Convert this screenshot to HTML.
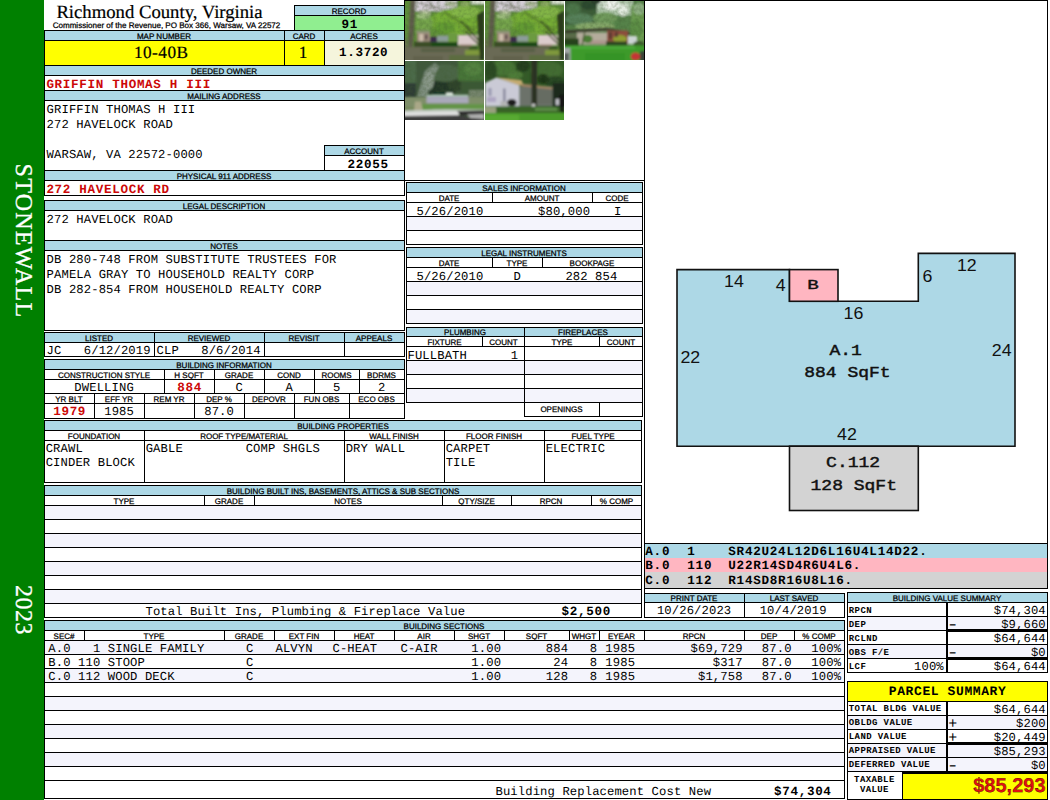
<!DOCTYPE html>
<html lang="en"><head><meta charset="utf-8"><title>Richmond County, Virginia - Property Card 10-40B</title>
<style>
html,body{margin:0;padding:0}
body{width:1050px;height:800px;position:relative;overflow:hidden;background:#fff;color:#000}
.r,.k,.x{position:absolute}
.k{background:#000}
.x{white-space:pre;text-rendering:geometricPrecision}
.s{font-family:"Liberation Sans",Arial,sans-serif;-webkit-text-stroke:0.25px #000}
.m{font-family:"Liberation Mono","Courier New",monospace}
.t{font-family:"Liberation Serif","Times New Roman",serif;-webkit-text-stroke:0.2px currentColor}
svg{position:absolute;display:block}
</style></head>
<body>
<div class="r" style="left:0px;top:0px;width:44px;height:800px;background:#008000"></div>
<div class="k" style="left:44px;top:30px;width:1px;height:166px"></div>
<div class="k" style="left:44px;top:200px;width:1px;height:131px"></div>
<div class="k" style="left:44px;top:332px;width:1px;height:25px"></div>
<div class="k" style="left:44px;top:359px;width:1px;height:60px"></div>
<div class="k" style="left:44px;top:420px;width:1px;height:63px"></div>
<div class="k" style="left:44px;top:485px;width:1px;height:133px"></div>
<div class="k" style="left:44px;top:620px;width:1px;height:179px"></div>
<div class="x t" style="left:23px;top:240.8px;width:0;height:0;color:#fff;font-size:24px;line-height:24px;letter-spacing:1.25px;-webkit-text-stroke:0.3px #fff"><div style="position:absolute;left:-100px;top:-12px;width:200px;text-align:center;transform:rotate(90deg)">STONEWALL</div></div>
<div class="x t" style="left:23px;top:610px;width:0;height:0;color:#fff;font-size:24px;line-height:24px;letter-spacing:0.5px;-webkit-text-stroke:0.3px #fff"><div style="position:absolute;left:-100px;top:-12px;width:200px;text-align:center;transform:rotate(90deg)">2023</div></div>
<div class="k" style="left:404px;top:0px;width:1px;height:196px"></div>
<div class="k" style="left:404px;top:200px;width:1px;height:131px"></div>
<div class="k" style="left:404px;top:332px;width:1px;height:25px"></div>
<div class="k" style="left:404px;top:359px;width:1px;height:60px"></div>
<div class="x t" style="top:0.69px;font-size:18.7px;line-height:24px;left:-140.5px;width:600px;text-align:center;">Richmond County, Virginia</div>
<div class="x s" style="top:20.71px;font-size:8.05px;line-height:10px;left:-133.5px;width:600px;text-align:center;">Commissioner of the Revenue, PO Box 366, Warsaw, VA 22572</div>
<div class="r" style="left:295px;top:6px;width:109px;height:9px;background:#add8e6"></div>
<div class="r" style="left:295px;top:16px;width:109px;height:14px;background:#90ee90"></div>
<div class="k" style="left:294px;top:5px;width:111px;height:1px"></div>
<div class="k" style="left:294px;top:15px;width:111px;height:1px"></div>
<div class="k" style="left:294px;top:5px;width:1px;height:26px"></div>
<div class="x s" style="top:7.23px;font-size:8.0px;line-height:10px;left:49px;width:600px;text-align:center;">RECORD</div>
<div class="x m" style="top:16.64px;font-size:12.6px;line-height:16px;left:49px;width:600px;text-align:center;font-weight:bold;letter-spacing:0.67px;padding-left:0.67px;">91</div>
<div class="k" style="left:44px;top:30px;width:361px;height:1px"></div>
<div class="r" style="left:45px;top:31px;width:359px;height:9px;background:#add8e6"></div>
<div class="k" style="left:44px;top:40px;width:361px;height:1px"></div>
<div class="r" style="left:45px;top:41px;width:279px;height:24px;background:#ffff00"></div>
<div class="r" style="left:325px;top:41px;width:79px;height:24px;background:#f5f5dc"></div>
<div class="k" style="left:44px;top:65px;width:361px;height:1px"></div>
<div class="k" style="left:284px;top:30px;width:1px;height:36px"></div>
<div class="k" style="left:324px;top:30px;width:1px;height:36px"></div>
<div class="x s" style="top:32.23px;font-size:8.0px;line-height:10px;left:-136px;width:600px;text-align:center;">MAP NUMBER</div>
<div class="x s" style="top:32.23px;font-size:8.0px;line-height:10px;left:4px;width:600px;text-align:center;">CARD</div>
<div class="x s" style="top:32.23px;font-size:8.0px;line-height:10px;left:64px;width:600px;text-align:center;">ACRES</div>
<div class="x t" style="top:42.20px;font-size:17.2px;line-height:22px;left:-139.3px;width:600px;text-align:center;letter-spacing:0.5px;padding-left:0.5px;">10-40B</div>
<div class="x t" style="top:42.20px;font-size:17.2px;line-height:22px;left:3px;width:600px;text-align:center;">1</div>
<div class="x m" style="top:44.64px;font-size:12.6px;line-height:16px;left:63px;width:600px;text-align:center;font-weight:bold;letter-spacing:0.67px;padding-left:0.67px;">1.3720</div>
<div class="r" style="left:45px;top:66px;width:359px;height:9px;background:#add8e6"></div>
<div class="k" style="left:44px;top:75px;width:361px;height:1px"></div>
<div class="k" style="left:44px;top:90px;width:361px;height:1px"></div>
<div class="x s" style="top:67.23px;font-size:8.0px;line-height:10px;left:-76px;width:600px;text-align:center;">DEEDED OWNER</div>
<div class="x m" style="top:76.64px;font-size:12.6px;line-height:16px;left:46.4px;font-weight:bold;color:#cc0808;letter-spacing:0.67px;">GRIFFIN THOMAS H III</div>
<div class="r" style="left:45px;top:91px;width:359px;height:9px;background:#add8e6"></div>
<div class="k" style="left:44px;top:100px;width:361px;height:1px"></div>
<div class="x s" style="top:92.23px;font-size:8.0px;line-height:10px;left:-76px;width:600px;text-align:center;">MAILING ADDRESS</div>
<div class="x m" style="top:101.75px;font-size:12.2px;line-height:16px;left:46.6px;letter-spacing:0.12px;">GRIFFIN THOMAS H III</div>
<div class="x m" style="top:116.75px;font-size:12.2px;line-height:16px;left:46.6px;letter-spacing:0.12px;">272 HAVELOCK ROAD</div>
<div class="x m" style="top:146.75px;font-size:12.2px;line-height:16px;left:46.6px;letter-spacing:0.12px;">WARSAW, VA 22572-0000</div>
<div class="k" style="left:324px;top:145px;width:81px;height:1px"></div>
<div class="k" style="left:324px;top:145px;width:1px;height:26px"></div>
<div class="r" style="left:325px;top:146px;width:79px;height:9px;background:#add8e6"></div>
<div class="k" style="left:324px;top:155px;width:81px;height:1px"></div>
<div class="x s" style="top:147.23px;font-size:8.0px;line-height:10px;left:64px;width:600px;text-align:center;">ACCOUNT</div>
<div class="x m" style="top:156.64px;font-size:12.6px;line-height:16px;left:67.5px;width:600px;text-align:center;font-weight:bold;letter-spacing:0.67px;padding-left:0.67px;">22055</div>
<div class="k" style="left:44px;top:170px;width:361px;height:1px"></div>
<div class="r" style="left:45px;top:171px;width:359px;height:9px;background:#add8e6"></div>
<div class="k" style="left:44px;top:180px;width:361px;height:1px"></div>
<div class="k" style="left:44px;top:195px;width:361px;height:1px"></div>
<div class="x s" style="top:172.23px;font-size:8.0px;line-height:10px;left:-76px;width:600px;text-align:center;">PHYSICAL 911 ADDRESS</div>
<div class="x m" style="top:181.64px;font-size:12.6px;line-height:16px;left:46.4px;font-weight:bold;color:#cc0808;letter-spacing:0.67px;">272 HAVELOCK RD</div>
<div class="k" style="left:44px;top:200px;width:361px;height:1px"></div>
<div class="r" style="left:45px;top:201px;width:359px;height:9px;background:#add8e6"></div>
<div class="k" style="left:44px;top:210px;width:361px;height:1px"></div>
<div class="k" style="left:44px;top:240px;width:361px;height:1px"></div>
<div class="x s" style="top:202.23px;font-size:8.0px;line-height:10px;left:-76px;width:600px;text-align:center;">LEGAL DESCRIPTION</div>
<div class="x m" style="top:211.75px;font-size:12.2px;line-height:16px;left:46.6px;letter-spacing:0.12px;">272 HAVELOCK ROAD</div>
<div class="r" style="left:45px;top:241px;width:359px;height:9px;background:#add8e6"></div>
<div class="k" style="left:44px;top:250px;width:361px;height:1px"></div>
<div class="k" style="left:44px;top:330px;width:361px;height:1px"></div>
<div class="x s" style="top:242.23px;font-size:8.0px;line-height:10px;left:-76px;width:600px;text-align:center;">NOTES</div>
<div class="x m" style="top:251.75px;font-size:12.2px;line-height:16px;left:46.6px;letter-spacing:0.12px;">DB 280-748 FROM SUBSTITUTE TRUSTEES FOR</div>
<div class="x m" style="top:266.75px;font-size:12.2px;line-height:16px;left:46.6px;letter-spacing:0.12px;">PAMELA GRAY TO HOUSEHOLD REALTY CORP</div>
<div class="x m" style="top:281.75px;font-size:12.2px;line-height:16px;left:46.6px;letter-spacing:0.12px;">DB 282-854 FROM HOUSEHOLD REALTY CORP</div>
<div class="k" style="left:44px;top:332px;width:361px;height:1px"></div>
<div class="r" style="left:45px;top:333px;width:359px;height:9px;background:#add8e6"></div>
<div class="k" style="left:44px;top:342px;width:361px;height:1px"></div>
<div class="k" style="left:44px;top:356px;width:361px;height:1px"></div>
<div class="k" style="left:154px;top:332px;width:1px;height:25px"></div>
<div class="k" style="left:264px;top:332px;width:1px;height:25px"></div>
<div class="k" style="left:344px;top:332px;width:1px;height:25px"></div>
<div class="x s" style="top:334.23px;font-size:8.0px;line-height:10px;left:-201px;width:600px;text-align:center;">LISTED</div>
<div class="x s" style="top:334.23px;font-size:8.0px;line-height:10px;left:-91px;width:600px;text-align:center;">REVIEWED</div>
<div class="x s" style="top:334.23px;font-size:8.0px;line-height:10px;left:4px;width:600px;text-align:center;">REVISIT</div>
<div class="x s" style="top:334.23px;font-size:8.0px;line-height:10px;left:74px;width:600px;text-align:center;">APPEALS</div>
<div class="x m" style="top:342.75px;font-size:12.2px;line-height:16px;left:46.6px;letter-spacing:0.12px;">JC   6/12/2019</div>
<div class="x m" style="top:342.75px;font-size:12.2px;line-height:16px;left:156.6px;letter-spacing:0.12px;">CLP   8/6/2014</div>
<div class="k" style="left:44px;top:359px;width:361px;height:1px"></div>
<div class="r" style="left:45px;top:360px;width:359px;height:9px;background:#add8e6"></div>
<div class="k" style="left:44px;top:369px;width:361px;height:1px"></div>
<div class="k" style="left:44px;top:379px;width:361px;height:1px"></div>
<div class="k" style="left:44px;top:393px;width:361px;height:1px"></div>
<div class="k" style="left:44px;top:403px;width:361px;height:1px"></div>
<div class="k" style="left:44px;top:418px;width:361px;height:1px"></div>
<div class="x s" style="top:361.23px;font-size:8.0px;line-height:10px;left:-76px;width:600px;text-align:center;">BUILDING INFORMATION</div>
<div class="k" style="left:164px;top:369px;width:1px;height:25px"></div>
<div class="k" style="left:214px;top:369px;width:1px;height:25px"></div>
<div class="k" style="left:264px;top:369px;width:1px;height:25px"></div>
<div class="k" style="left:314px;top:369px;width:1px;height:25px"></div>
<div class="k" style="left:359px;top:369px;width:1px;height:25px"></div>
<div class="k" style="left:94px;top:393px;width:1px;height:26px"></div>
<div class="k" style="left:144px;top:393px;width:1px;height:26px"></div>
<div class="k" style="left:194px;top:393px;width:1px;height:26px"></div>
<div class="k" style="left:244px;top:393px;width:1px;height:26px"></div>
<div class="k" style="left:294px;top:393px;width:1px;height:26px"></div>
<div class="k" style="left:349px;top:393px;width:1px;height:26px"></div>
<div class="x s" style="top:371.23px;font-size:8.0px;line-height:10px;left:-196px;width:600px;text-align:center;">CONSTRUCTION STYLE</div>
<div class="x s" style="top:371.23px;font-size:8.0px;line-height:10px;left:-111px;width:600px;text-align:center;">H SQFT</div>
<div class="x s" style="top:371.23px;font-size:8.0px;line-height:10px;left:-61px;width:600px;text-align:center;">GRADE</div>
<div class="x s" style="top:371.23px;font-size:8.0px;line-height:10px;left:-11px;width:600px;text-align:center;">COND</div>
<div class="x s" style="top:371.23px;font-size:8.0px;line-height:10px;left:36.5px;width:600px;text-align:center;">ROOMS</div>
<div class="x s" style="top:371.23px;font-size:8.0px;line-height:10px;left:81.5px;width:600px;text-align:center;">BDRMS</div>
<div class="x m" style="top:379.75px;font-size:12.2px;line-height:16px;left:-196px;width:600px;text-align:center;letter-spacing:0.12px;padding-left:0.12px;">DWELLING</div>
<div class="x m" style="top:379.64px;font-size:12.6px;line-height:16px;left:-111px;width:600px;text-align:center;font-weight:bold;color:#cc0808;letter-spacing:0.67px;padding-left:0.67px;">884</div>
<div class="x m" style="top:379.75px;font-size:12.2px;line-height:16px;left:-61px;width:600px;text-align:center;letter-spacing:0.12px;padding-left:0.12px;">C</div>
<div class="x m" style="top:379.75px;font-size:12.2px;line-height:16px;left:-11px;width:600px;text-align:center;letter-spacing:0.12px;padding-left:0.12px;">A</div>
<div class="x m" style="top:379.75px;font-size:12.2px;line-height:16px;left:36.5px;width:600px;text-align:center;letter-spacing:0.12px;padding-left:0.12px;">5</div>
<div class="x m" style="top:379.75px;font-size:12.2px;line-height:16px;left:81.5px;width:600px;text-align:center;letter-spacing:0.12px;padding-left:0.12px;">2</div>
<div class="x s" style="top:395.23px;font-size:8.0px;line-height:10px;left:-231px;width:600px;text-align:center;">YR BLT</div>
<div class="x s" style="top:395.23px;font-size:8.0px;line-height:10px;left:-181px;width:600px;text-align:center;">EFF YR</div>
<div class="x s" style="top:395.23px;font-size:8.0px;line-height:10px;left:-131px;width:600px;text-align:center;">REM YR</div>
<div class="x s" style="top:395.23px;font-size:8.0px;line-height:10px;left:-81px;width:600px;text-align:center;">DEP %</div>
<div class="x s" style="top:395.23px;font-size:8.0px;line-height:10px;left:-31px;width:600px;text-align:center;">DEPOVR</div>
<div class="x s" style="top:395.23px;font-size:8.0px;line-height:10px;left:21.5px;width:600px;text-align:center;">FUN OBS</div>
<div class="x s" style="top:395.23px;font-size:8.0px;line-height:10px;left:76.5px;width:600px;text-align:center;">ECO OBS</div>
<div class="x m" style="top:403.64px;font-size:12.6px;line-height:16px;left:-231px;width:600px;text-align:center;font-weight:bold;color:#cc0808;letter-spacing:0.67px;padding-left:0.67px;">1979</div>
<div class="x m" style="top:403.75px;font-size:12.2px;line-height:16px;left:-181px;width:600px;text-align:center;letter-spacing:0.12px;padding-left:0.12px;">1985</div>
<div class="x m" style="top:403.75px;font-size:12.2px;line-height:16px;left:-81px;width:600px;text-align:center;letter-spacing:0.12px;padding-left:0.12px;">87.0</div>
<div class="k" style="left:44px;top:420px;width:598px;height:1px"></div>
<div class="r" style="left:45px;top:421px;width:596px;height:9px;background:#add8e6"></div>
<div class="k" style="left:44px;top:430px;width:598px;height:1px"></div>
<div class="k" style="left:44px;top:440px;width:598px;height:1px"></div>
<div class="k" style="left:44px;top:482px;width:598px;height:1px"></div>
<div class="k" style="left:641px;top:420px;width:1px;height:63px"></div>
<div class="k" style="left:144px;top:430px;width:1px;height:53px"></div>
<div class="k" style="left:344px;top:430px;width:1px;height:53px"></div>
<div class="k" style="left:444px;top:430px;width:1px;height:53px"></div>
<div class="k" style="left:544px;top:430px;width:1px;height:53px"></div>
<div class="x s" style="top:422.23px;font-size:8.0px;line-height:10px;left:43px;width:600px;text-align:center;">BUILDING PROPERTIES</div>
<div class="x s" style="top:432.23px;font-size:8.0px;line-height:10px;left:-206px;width:600px;text-align:center;">FOUNDATION</div>
<div class="x s" style="top:432.23px;font-size:8.0px;line-height:10px;left:-56px;width:600px;text-align:center;">ROOF TYPE/MATERIAL</div>
<div class="x s" style="top:432.23px;font-size:8.0px;line-height:10px;left:94px;width:600px;text-align:center;">WALL FINISH</div>
<div class="x s" style="top:432.23px;font-size:8.0px;line-height:10px;left:194px;width:600px;text-align:center;">FLOOR FINISH</div>
<div class="x s" style="top:432.23px;font-size:8.0px;line-height:10px;left:293px;width:600px;text-align:center;">FUEL TYPE</div>
<div class="x m" style="top:440.75px;font-size:12.2px;line-height:16px;left:45.7px;letter-spacing:0.12px;">CRAWL</div>
<div class="x m" style="top:454.75px;font-size:12.2px;line-height:16px;left:45.7px;letter-spacing:0.12px;">CINDER BLOCK</div>
<div class="x m" style="top:440.75px;font-size:12.2px;line-height:16px;left:145.7px;letter-spacing:0.12px;">GABLE</div>
<div class="x m" style="top:440.75px;font-size:12.2px;line-height:16px;left:245.7px;letter-spacing:0.12px;">COMP SHGLS</div>
<div class="x m" style="top:440.75px;font-size:12.2px;line-height:16px;left:345.7px;letter-spacing:0.12px;">DRY WALL</div>
<div class="x m" style="top:440.75px;font-size:12.2px;line-height:16px;left:445.7px;letter-spacing:0.12px;">CARPET</div>
<div class="x m" style="top:454.75px;font-size:12.2px;line-height:16px;left:445.7px;letter-spacing:0.12px;">TILE</div>
<div class="x m" style="top:440.75px;font-size:12.2px;line-height:16px;left:545.7px;letter-spacing:0.12px;">ELECTRIC</div>
<div class="k" style="left:44px;top:485px;width:598px;height:1px"></div>
<div class="r" style="left:45px;top:486px;width:596px;height:9px;background:#add8e6"></div>
<div class="k" style="left:44px;top:495px;width:598px;height:1px"></div>
<div class="k" style="left:44px;top:505px;width:598px;height:1px"></div>
<div class="k" style="left:641px;top:485px;width:1px;height:133px"></div>
<div class="r" style="left:45px;top:506px;width:596px;height:13px;background:#f4f4fc"></div>
<div class="k" style="left:44px;top:519px;width:598px;height:1px"></div>
<div class="k" style="left:44px;top:533px;width:598px;height:1px"></div>
<div class="r" style="left:45px;top:534px;width:596px;height:13px;background:#f4f4fc"></div>
<div class="k" style="left:44px;top:547px;width:598px;height:1px"></div>
<div class="k" style="left:44px;top:561px;width:598px;height:1px"></div>
<div class="r" style="left:45px;top:562px;width:596px;height:13px;background:#f4f4fc"></div>
<div class="k" style="left:44px;top:575px;width:598px;height:1px"></div>
<div class="k" style="left:44px;top:589px;width:598px;height:1px"></div>
<div class="r" style="left:45px;top:590px;width:596px;height:13px;background:#f4f4fc"></div>
<div class="k" style="left:44px;top:603px;width:598px;height:1px"></div>
<div class="k" style="left:44px;top:617px;width:598px;height:1px"></div>
<div class="k" style="left:204px;top:495px;width:1px;height:11px"></div>
<div class="k" style="left:254px;top:495px;width:1px;height:11px"></div>
<div class="k" style="left:442px;top:495px;width:1px;height:11px"></div>
<div class="k" style="left:511px;top:495px;width:1px;height:11px"></div>
<div class="k" style="left:591px;top:495px;width:1px;height:11px"></div>
<div class="x s" style="top:487.23px;font-size:8.0px;line-height:10px;left:43px;width:600px;text-align:center;">BUILDING BUILT INS, BASEMENTS, ATTICS &amp; SUB SECTIONS</div>
<div class="x s" style="top:497.23px;font-size:8.0px;line-height:10px;left:-176px;width:600px;text-align:center;">TYPE</div>
<div class="x s" style="top:497.23px;font-size:8.0px;line-height:10px;left:-71px;width:600px;text-align:center;">GRADE</div>
<div class="x s" style="top:497.23px;font-size:8.0px;line-height:10px;left:48px;width:600px;text-align:center;">NOTES</div>
<div class="x s" style="top:497.23px;font-size:8.0px;line-height:10px;left:176.5px;width:600px;text-align:center;">QTY/SIZE</div>
<div class="x s" style="top:497.23px;font-size:8.0px;line-height:10px;left:251px;width:600px;text-align:center;">RPCN</div>
<div class="x s" style="top:497.23px;font-size:8.0px;line-height:10px;left:316.5px;width:600px;text-align:center;">% COMP</div>
<div class="x m" style="top:603.75px;font-size:12.2px;line-height:16px;left:145.5px;letter-spacing:0.12px;">Total Built Ins, Plumbing &amp; Fireplace Value</div>
<div class="x m" style="top:603.64px;font-size:12.6px;line-height:16px;left:561.5px;font-weight:bold;letter-spacing:0.67px;">$2,500</div>
<div class="k" style="left:44px;top:620px;width:801px;height:1px"></div>
<div class="r" style="left:45px;top:621px;width:799px;height:9px;background:#add8e6"></div>
<div class="k" style="left:44px;top:630px;width:801px;height:1px"></div>
<div class="k" style="left:44px;top:640px;width:801px;height:1px"></div>
<div class="k" style="left:844px;top:620px;width:1px;height:179px"></div>
<div class="r" style="left:45px;top:641px;width:799px;height:13px;background:#f4f4fc"></div>
<div class="k" style="left:44px;top:654px;width:801px;height:1px"></div>
<div class="k" style="left:44px;top:668px;width:801px;height:1px"></div>
<div class="r" style="left:45px;top:669px;width:799px;height:13px;background:#f4f4fc"></div>
<div class="k" style="left:44px;top:682px;width:801px;height:1px"></div>
<div class="k" style="left:44px;top:696px;width:801px;height:1px"></div>
<div class="r" style="left:45px;top:697px;width:799px;height:13px;background:#f4f4fc"></div>
<div class="k" style="left:44px;top:710px;width:801px;height:1px"></div>
<div class="k" style="left:44px;top:724px;width:801px;height:1px"></div>
<div class="r" style="left:45px;top:725px;width:799px;height:13px;background:#f4f4fc"></div>
<div class="k" style="left:44px;top:738px;width:801px;height:1px"></div>
<div class="k" style="left:44px;top:752px;width:801px;height:1px"></div>
<div class="r" style="left:45px;top:753px;width:799px;height:13px;background:#f4f4fc"></div>
<div class="k" style="left:44px;top:766px;width:801px;height:1px"></div>
<div class="k" style="left:44px;top:780px;width:801px;height:1px"></div>
<div class="k" style="left:44px;top:798px;width:801px;height:1px"></div>
<div class="k" style="left:84px;top:630px;width:1px;height:11px"></div>
<div class="k" style="left:224px;top:630px;width:1px;height:11px"></div>
<div class="k" style="left:274px;top:630px;width:1px;height:11px"></div>
<div class="k" style="left:334px;top:630px;width:1px;height:11px"></div>
<div class="k" style="left:394px;top:630px;width:1px;height:11px"></div>
<div class="k" style="left:454px;top:630px;width:1px;height:11px"></div>
<div class="k" style="left:504px;top:630px;width:1px;height:11px"></div>
<div class="k" style="left:569px;top:630px;width:1px;height:11px"></div>
<div class="k" style="left:599px;top:630px;width:1px;height:11px"></div>
<div class="k" style="left:644px;top:630px;width:1px;height:11px"></div>
<div class="k" style="left:744px;top:630px;width:1px;height:11px"></div>
<div class="k" style="left:794px;top:630px;width:1px;height:11px"></div>
<div class="x s" style="top:622.23px;font-size:8.0px;line-height:10px;left:144px;width:600px;text-align:center;">BUILDING SECTIONS</div>
<div class="x s" style="top:632.23px;font-size:8.0px;line-height:10px;left:-236px;width:600px;text-align:center;">SEC#</div>
<div class="x s" style="top:632.23px;font-size:8.0px;line-height:10px;left:-146px;width:600px;text-align:center;">TYPE</div>
<div class="x s" style="top:632.23px;font-size:8.0px;line-height:10px;left:-51px;width:600px;text-align:center;">GRADE</div>
<div class="x s" style="top:632.23px;font-size:8.0px;line-height:10px;left:4px;width:600px;text-align:center;">EXT FIN</div>
<div class="x s" style="top:632.23px;font-size:8.0px;line-height:10px;left:64px;width:600px;text-align:center;">HEAT</div>
<div class="x s" style="top:632.23px;font-size:8.0px;line-height:10px;left:124px;width:600px;text-align:center;">AIR</div>
<div class="x s" style="top:632.23px;font-size:8.0px;line-height:10px;left:179px;width:600px;text-align:center;">SHGT</div>
<div class="x s" style="top:632.23px;font-size:8.0px;line-height:10px;left:236.5px;width:600px;text-align:center;">SQFT</div>
<div class="x s" style="top:632.23px;font-size:8.0px;line-height:10px;left:284px;width:600px;text-align:center;">WHGT</div>
<div class="x s" style="top:632.23px;font-size:8.0px;line-height:10px;left:321.5px;width:600px;text-align:center;">EYEAR</div>
<div class="x s" style="top:632.23px;font-size:8.0px;line-height:10px;left:394px;width:600px;text-align:center;">RPCN</div>
<div class="x s" style="top:632.23px;font-size:8.0px;line-height:10px;left:469px;width:600px;text-align:center;">DEP</div>
<div class="x s" style="top:632.23px;font-size:8.0px;line-height:10px;left:519px;width:600px;text-align:center;">% COMP</div>
<div class="x m" style="top:640.75px;font-size:12.2px;line-height:16px;left:48.3px;letter-spacing:0.12px;">A.0   1 SINGLE FAMILY</div>
<div class="x m" style="top:640.75px;font-size:12.2px;line-height:16px;left:-50.5px;width:600px;text-align:center;letter-spacing:0.12px;padding-left:0.12px;">C</div>
<div class="x m" style="top:640.75px;font-size:12.2px;line-height:16px;left:275.5px;letter-spacing:0.12px;">ALVYN</div>
<div class="x m" style="top:640.75px;font-size:12.2px;line-height:16px;left:332.5px;letter-spacing:0.12px;">C-HEAT</div>
<div class="x m" style="top:640.75px;font-size:12.2px;line-height:16px;left:400.5px;letter-spacing:0.12px;">C-AIR</div>
<div class="x m" style="top:640.75px;font-size:12.2px;line-height:16px;left:-99px;width:600px;text-align:right;letter-spacing:0.12px;margin-left:0.12px;">1.00</div>
<div class="x m" style="top:640.75px;font-size:12.2px;line-height:16px;left:-32px;width:600px;text-align:right;letter-spacing:0.12px;margin-left:0.12px;">884</div>
<div class="x m" style="top:640.75px;font-size:12.2px;line-height:16px;left:-3px;width:600px;text-align:right;letter-spacing:0.12px;margin-left:0.12px;">8</div>
<div class="x m" style="top:640.75px;font-size:12.2px;line-height:16px;left:35px;width:600px;text-align:right;letter-spacing:0.12px;margin-left:0.12px;">1985</div>
<div class="x m" style="top:640.75px;font-size:12.2px;line-height:16px;left:142.5px;width:600px;text-align:right;letter-spacing:0.12px;margin-left:0.12px;">$69,729</div>
<div class="x m" style="top:640.75px;font-size:12.2px;line-height:16px;left:191.5px;width:600px;text-align:right;letter-spacing:0.12px;margin-left:0.12px;">87.0</div>
<div class="x m" style="top:640.75px;font-size:12.2px;line-height:16px;left:241px;width:600px;text-align:right;letter-spacing:0.12px;margin-left:0.12px;">100%</div>
<div class="x m" style="top:654.75px;font-size:12.2px;line-height:16px;left:48.3px;letter-spacing:0.12px;">B.0 110 STOOP</div>
<div class="x m" style="top:654.75px;font-size:12.2px;line-height:16px;left:-50.5px;width:600px;text-align:center;letter-spacing:0.12px;padding-left:0.12px;">C</div>
<div class="x m" style="top:654.75px;font-size:12.2px;line-height:16px;left:-99px;width:600px;text-align:right;letter-spacing:0.12px;margin-left:0.12px;">1.00</div>
<div class="x m" style="top:654.75px;font-size:12.2px;line-height:16px;left:-32px;width:600px;text-align:right;letter-spacing:0.12px;margin-left:0.12px;">24</div>
<div class="x m" style="top:654.75px;font-size:12.2px;line-height:16px;left:-3px;width:600px;text-align:right;letter-spacing:0.12px;margin-left:0.12px;">8</div>
<div class="x m" style="top:654.75px;font-size:12.2px;line-height:16px;left:35px;width:600px;text-align:right;letter-spacing:0.12px;margin-left:0.12px;">1985</div>
<div class="x m" style="top:654.75px;font-size:12.2px;line-height:16px;left:142.5px;width:600px;text-align:right;letter-spacing:0.12px;margin-left:0.12px;">$317</div>
<div class="x m" style="top:654.75px;font-size:12.2px;line-height:16px;left:191.5px;width:600px;text-align:right;letter-spacing:0.12px;margin-left:0.12px;">87.0</div>
<div class="x m" style="top:654.75px;font-size:12.2px;line-height:16px;left:241px;width:600px;text-align:right;letter-spacing:0.12px;margin-left:0.12px;">100%</div>
<div class="x m" style="top:668.75px;font-size:12.2px;line-height:16px;left:48.3px;letter-spacing:0.12px;">C.0 112 WOOD DECK</div>
<div class="x m" style="top:668.75px;font-size:12.2px;line-height:16px;left:-50.5px;width:600px;text-align:center;letter-spacing:0.12px;padding-left:0.12px;">C</div>
<div class="x m" style="top:668.75px;font-size:12.2px;line-height:16px;left:-99px;width:600px;text-align:right;letter-spacing:0.12px;margin-left:0.12px;">1.00</div>
<div class="x m" style="top:668.75px;font-size:12.2px;line-height:16px;left:-32px;width:600px;text-align:right;letter-spacing:0.12px;margin-left:0.12px;">128</div>
<div class="x m" style="top:668.75px;font-size:12.2px;line-height:16px;left:-3px;width:600px;text-align:right;letter-spacing:0.12px;margin-left:0.12px;">8</div>
<div class="x m" style="top:668.75px;font-size:12.2px;line-height:16px;left:35px;width:600px;text-align:right;letter-spacing:0.12px;margin-left:0.12px;">1985</div>
<div class="x m" style="top:668.75px;font-size:12.2px;line-height:16px;left:142.5px;width:600px;text-align:right;letter-spacing:0.12px;margin-left:0.12px;">$1,758</div>
<div class="x m" style="top:668.75px;font-size:12.2px;line-height:16px;left:191.5px;width:600px;text-align:right;letter-spacing:0.12px;margin-left:0.12px;">87.0</div>
<div class="x m" style="top:668.75px;font-size:12.2px;line-height:16px;left:241px;width:600px;text-align:right;letter-spacing:0.12px;margin-left:0.12px;">100%</div>
<div class="x m" style="top:783.75px;font-size:12.2px;line-height:16px;left:495.5px;letter-spacing:0.12px;">Building Replacement Cost New</div>
<div class="x m" style="top:783.64px;font-size:12.6px;line-height:16px;left:774px;font-weight:bold;letter-spacing:0.67px;">$74,304</div>
<div class="k" style="left:405px;top:0px;width:643px;height:1px"></div>
<div class="k" style="left:644px;top:0px;width:1px;height:618px"></div>
<div class="k" style="left:404px;top:180px;width:241px;height:1px"></div>
<div class="r" style="left:407px;top:183px;width:235px;height:9px;background:#add8e6"></div>
<div class="k" style="left:406px;top:182px;width:237px;height:1px"></div>
<div class="k" style="left:406px;top:192px;width:237px;height:1px"></div>
<div class="k" style="left:406px;top:202px;width:237px;height:1px"></div>
<div class="k" style="left:406px;top:216px;width:237px;height:1px"></div>
<div class="r" style="left:407px;top:217px;width:235px;height:13px;background:#f4f4fc"></div>
<div class="k" style="left:406px;top:230px;width:237px;height:1px"></div>
<div class="k" style="left:406px;top:244px;width:237px;height:1px"></div>
<div class="k" style="left:406px;top:182px;width:1px;height:63px"></div>
<div class="k" style="left:642px;top:182px;width:1px;height:63px"></div>
<div class="k" style="left:492px;top:192px;width:1px;height:11px"></div>
<div class="k" style="left:592px;top:192px;width:1px;height:11px"></div>
<div class="x s" style="top:184.23px;font-size:8.0px;line-height:10px;left:224px;width:600px;text-align:center;">SALES INFORMATION</div>
<div class="x s" style="top:194.23px;font-size:8.0px;line-height:10px;left:149px;width:600px;text-align:center;">DATE</div>
<div class="x s" style="top:194.23px;font-size:8.0px;line-height:10px;left:242px;width:600px;text-align:center;">AMOUNT</div>
<div class="x s" style="top:194.23px;font-size:8.0px;line-height:10px;left:317px;width:600px;text-align:center;">CODE</div>
<div class="x m" style="top:203.75px;font-size:12.2px;line-height:16px;left:416.5px;letter-spacing:0.12px;">5/26/2010</div>
<div class="x m" style="top:203.75px;font-size:12.2px;line-height:16px;left:-10px;width:600px;text-align:right;letter-spacing:0.12px;margin-left:0.12px;">$80,000</div>
<div class="x m" style="top:203.75px;font-size:12.2px;line-height:16px;left:317.5px;width:600px;text-align:center;letter-spacing:0.12px;padding-left:0.12px;">I</div>
<div class="r" style="left:407px;top:248px;width:235px;height:9px;background:#add8e6"></div>
<div class="k" style="left:406px;top:247px;width:237px;height:1px"></div>
<div class="k" style="left:406px;top:257px;width:237px;height:1px"></div>
<div class="k" style="left:406px;top:267px;width:237px;height:1px"></div>
<div class="k" style="left:406px;top:281px;width:237px;height:1px"></div>
<div class="r" style="left:407px;top:282px;width:235px;height:13px;background:#f4f4fc"></div>
<div class="k" style="left:406px;top:295px;width:237px;height:1px"></div>
<div class="k" style="left:406px;top:309px;width:237px;height:1px"></div>
<div class="r" style="left:407px;top:310px;width:235px;height:13px;background:#f4f4fc"></div>
<div class="k" style="left:406px;top:323px;width:237px;height:1px"></div>
<div class="k" style="left:406px;top:247px;width:1px;height:77px"></div>
<div class="k" style="left:642px;top:247px;width:1px;height:77px"></div>
<div class="k" style="left:492px;top:257px;width:1px;height:11px"></div>
<div class="k" style="left:542px;top:257px;width:1px;height:11px"></div>
<div class="x s" style="top:249.23px;font-size:8.0px;line-height:10px;left:224px;width:600px;text-align:center;">LEGAL INSTRUMENTS</div>
<div class="x s" style="top:259.23px;font-size:8.0px;line-height:10px;left:149px;width:600px;text-align:center;">DATE</div>
<div class="x s" style="top:259.23px;font-size:8.0px;line-height:10px;left:217px;width:600px;text-align:center;">TYPE</div>
<div class="x s" style="top:259.23px;font-size:8.0px;line-height:10px;left:292px;width:600px;text-align:center;">BOOKPAGE</div>
<div class="x m" style="top:268.75px;font-size:12.2px;line-height:16px;left:416.5px;letter-spacing:0.12px;">5/26/2010</div>
<div class="x m" style="top:268.75px;font-size:12.2px;line-height:16px;left:217px;width:600px;text-align:center;letter-spacing:0.12px;padding-left:0.12px;">D</div>
<div class="x m" style="top:268.75px;font-size:12.2px;line-height:16px;left:291.29999999999995px;width:600px;text-align:center;letter-spacing:0.12px;padding-left:0.12px;">282 854</div>
<div class="r" style="left:407px;top:328px;width:235px;height:8px;background:#add8e6"></div>
<div class="k" style="left:406px;top:327px;width:237px;height:1px"></div>
<div class="k" style="left:406px;top:336px;width:237px;height:1px"></div>
<div class="k" style="left:406px;top:346px;width:237px;height:1px"></div>
<div class="k" style="left:406px;top:360px;width:237px;height:1px"></div>
<div class="r" style="left:407px;top:361px;width:235px;height:13px;background:#f4f4fc"></div>
<div class="k" style="left:406px;top:374px;width:237px;height:1px"></div>
<div class="k" style="left:406px;top:388px;width:237px;height:1px"></div>
<div class="r" style="left:407px;top:389px;width:235px;height:13px;background:#f4f4fc"></div>
<div class="k" style="left:406px;top:402px;width:237px;height:1px"></div>
<div class="k" style="left:406px;top:327px;width:1px;height:76px"></div>
<div class="k" style="left:524px;top:327px;width:1px;height:90px"></div>
<div class="k" style="left:642px;top:327px;width:1px;height:90px"></div>
<div class="k" style="left:482px;top:336px;width:1px;height:11px"></div>
<div class="k" style="left:599px;top:336px;width:1px;height:11px"></div>
<div class="k" style="left:599px;top:402px;width:1px;height:15px"></div>
<div class="k" style="left:524px;top:416px;width:119px;height:1px"></div>
<div class="x s" style="top:328.23px;font-size:8.0px;line-height:10px;left:165px;width:600px;text-align:center;">PLUMBING</div>
<div class="x s" style="top:328.23px;font-size:8.0px;line-height:10px;left:283px;width:600px;text-align:center;">FIREPLACES</div>
<div class="x s" style="top:338.23px;font-size:8.0px;line-height:10px;left:144.5px;width:600px;text-align:center;">FIXTURE</div>
<div class="x s" style="top:338.23px;font-size:8.0px;line-height:10px;left:203.5px;width:600px;text-align:center;">COUNT</div>
<div class="x s" style="top:338.23px;font-size:8.0px;line-height:10px;left:262px;width:600px;text-align:center;">TYPE</div>
<div class="x s" style="top:338.23px;font-size:8.0px;line-height:10px;left:321px;width:600px;text-align:center;">COUNT</div>
<div class="x s" style="top:405.23px;font-size:8.0px;line-height:10px;left:261.5px;width:600px;text-align:center;">OPENINGS</div>
<div class="x m" style="top:347.75px;font-size:12.2px;line-height:16px;left:407.5px;letter-spacing:0.12px;">FULLBATH</div>
<div class="x m" style="top:347.75px;font-size:12.2px;line-height:16px;left:-82px;width:600px;text-align:right;letter-spacing:0.12px;margin-left:0.12px;">1</div>
<div class="k" style="left:1047px;top:0px;width:1px;height:589px"></div>
<div class="k" style="left:644px;top:543px;width:404px;height:1px"></div>
<div class="r" style="left:645px;top:544px;width:402px;height:14px;background:#add8e6"></div>
<div class="r" style="left:645px;top:558px;width:402px;height:14px;background:#ffb6c1"></div>
<div class="r" style="left:645px;top:572px;width:402px;height:16px;background:#d3d3d3"></div>
<div class="k" style="left:644px;top:588px;width:404px;height:1px"></div>
<div class="x m" style="top:543.64px;font-size:12.6px;line-height:16px;left:645.3px;font-weight:bold;letter-spacing:0.74px;">A.0</div>
<div class="x m" style="top:543.64px;font-size:12.6px;line-height:16px;left:687.3px;font-weight:bold;letter-spacing:0.74px;">1</div>
<div class="x m" style="top:543.64px;font-size:12.6px;line-height:16px;left:728.3px;font-weight:bold;letter-spacing:0.74px;">SR42U24L12D6L16U4L14D22.</div>
<div class="x m" style="top:557.64px;font-size:12.6px;line-height:16px;left:645.3px;font-weight:bold;letter-spacing:0.74px;">B.0</div>
<div class="x m" style="top:557.64px;font-size:12.6px;line-height:16px;left:687.3px;font-weight:bold;letter-spacing:0.74px;">110</div>
<div class="x m" style="top:557.64px;font-size:12.6px;line-height:16px;left:728.3px;font-weight:bold;letter-spacing:0.74px;">U22R14SD4R6U4L6.</div>
<div class="x m" style="top:572.64px;font-size:12.6px;line-height:16px;left:645.3px;font-weight:bold;letter-spacing:0.74px;">C.0</div>
<div class="x m" style="top:572.64px;font-size:12.6px;line-height:16px;left:687.3px;font-weight:bold;letter-spacing:0.74px;">112</div>
<div class="x m" style="top:572.64px;font-size:12.6px;line-height:16px;left:728.3px;font-weight:bold;letter-spacing:0.74px;">R14SD8R16U8L16.</div>
<div class="k" style="left:644px;top:593px;width:201px;height:1px"></div>
<div class="r" style="left:645px;top:594px;width:199px;height:8px;background:#add8e6"></div>
<div class="k" style="left:644px;top:602px;width:201px;height:1px"></div>
<div class="k" style="left:644px;top:617px;width:201px;height:1px"></div>
<div class="k" style="left:744px;top:593px;width:1px;height:25px"></div>
<div class="k" style="left:844px;top:593px;width:1px;height:25px"></div>
<div class="x s" style="top:594.23px;font-size:8.0px;line-height:10px;left:394px;width:600px;text-align:center;">PRINT DATE</div>
<div class="x s" style="top:594.23px;font-size:8.0px;line-height:10px;left:494px;width:600px;text-align:center;">LAST SAVED</div>
<div class="x m" style="top:602.75px;font-size:12.2px;line-height:16px;left:394px;width:600px;text-align:center;letter-spacing:0.12px;padding-left:0.12px;">10/26/2023</div>
<div class="x m" style="top:602.75px;font-size:12.2px;line-height:16px;left:493px;width:600px;text-align:center;letter-spacing:0.12px;padding-left:0.12px;">10/4/2019</div>
<div class="k" style="left:847px;top:592px;width:201px;height:1px"></div>
<div class="r" style="left:848px;top:593px;width:199px;height:9px;background:#add8e6"></div>
<div class="x s" style="top:594.23px;font-size:8.0px;line-height:10px;left:647px;width:600px;text-align:center;">BUILDING VALUE SUMMARY</div>
<div class="k" style="left:847px;top:602px;width:201px;height:1px"></div>
<div class="k" style="left:847px;top:592px;width:1px;height:81px"></div>
<div class="k" style="left:1047px;top:592px;width:1px;height:81px"></div>
<div class="k" style="left:847px;top:616px;width:201px;height:1px"></div>
<div class="x m" style="top:604.60px;font-size:9.0px;line-height:12px;left:848.8px;font-weight:bold;letter-spacing:0.4px;">RPCN</div>
<div class="x m" style="top:602.75px;font-size:12.2px;line-height:16px;left:445.70000000000005px;width:600px;text-align:right;letter-spacing:0.12px;margin-left:0.12px;">$74,304</div>
<div class="r" style="left:848px;top:617px;width:199px;height:13px;background:#f4f4fc"></div>
<div class="k" style="left:847px;top:630px;width:201px;height:1px"></div>
<div class="x m" style="top:618.60px;font-size:9.0px;line-height:12px;left:848.8px;font-weight:bold;letter-spacing:0.4px;">DEP</div>
<div class="x m" style="top:616.75px;font-size:12.2px;line-height:16px;left:949px;letter-spacing:0.12px;-webkit-text-stroke:0.3px #000">–</div>
<div class="x m" style="top:616.75px;font-size:12.2px;line-height:16px;left:445.70000000000005px;width:600px;text-align:right;letter-spacing:0.12px;margin-left:0.12px;">$9,660</div>
<div class="k" style="left:847px;top:644px;width:201px;height:1px"></div>
<div class="x m" style="top:632.60px;font-size:9.0px;line-height:12px;left:848.8px;font-weight:bold;letter-spacing:0.4px;">RCLND</div>
<div class="x m" style="top:630.75px;font-size:12.2px;line-height:16px;left:445.70000000000005px;width:600px;text-align:right;letter-spacing:0.12px;margin-left:0.12px;">$64,644</div>
<div class="r" style="left:848px;top:645px;width:199px;height:13px;background:#f4f4fc"></div>
<div class="k" style="left:847px;top:658px;width:201px;height:1px"></div>
<div class="x m" style="top:646.60px;font-size:9.0px;line-height:12px;left:848.8px;font-weight:bold;letter-spacing:0.4px;">OBS F/E</div>
<div class="x m" style="top:644.75px;font-size:12.2px;line-height:16px;left:949px;letter-spacing:0.12px;-webkit-text-stroke:0.3px #000">–</div>
<div class="x m" style="top:644.75px;font-size:12.2px;line-height:16px;left:445.70000000000005px;width:600px;text-align:right;letter-spacing:0.12px;margin-left:0.12px;">$0</div>
<div class="k" style="left:847px;top:672px;width:201px;height:1px"></div>
<div class="x m" style="top:660.60px;font-size:9.0px;line-height:12px;left:848.8px;font-weight:bold;letter-spacing:0.4px;">LCF</div>
<div class="x m" style="top:658.75px;font-size:12.2px;line-height:16px;left:445.70000000000005px;width:600px;text-align:right;letter-spacing:0.12px;margin-left:0.12px;">$64,644</div>
<div class="x m" style="top:658.75px;font-size:12.2px;line-height:16px;left:343.70000000000005px;width:600px;text-align:right;letter-spacing:0.12px;margin-left:0.12px;">100%</div>
<div class="k" style="left:946px;top:602px;width:2px;height:71px"></div>
<div class="k" style="left:947px;top:629px;width:101px;height:3px"></div>
<div class="k" style="left:947px;top:657px;width:101px;height:3px"></div>
<div class="k" style="left:847px;top:681px;width:201px;height:1px"></div>
<div class="r" style="left:848px;top:682px;width:199px;height:19px;background:#ffff00"></div>
<div class="k" style="left:847px;top:701px;width:201px;height:1px"></div>
<div class="k" style="left:847px;top:681px;width:1px;height:119px"></div>
<div class="k" style="left:1047px;top:681px;width:1px;height:119px"></div>
<div class="k" style="left:847px;top:799px;width:201px;height:1px"></div>
<div class="x m" style="top:683.04px;font-size:13px;line-height:17px;left:647px;width:600px;text-align:center;font-weight:bold;letter-spacing:0.6px;padding-left:0.6px;">PARCEL SUMMARY</div>
<div class="k" style="left:847px;top:715px;width:201px;height:1px"></div>
<div class="x m" style="top:702.60px;font-size:9.0px;line-height:12px;left:848.8px;font-weight:bold;letter-spacing:0.4px;">TOTAL BLDG VALUE</div>
<div class="x m" style="top:701.75px;font-size:12.2px;line-height:16px;left:445.70000000000005px;width:600px;text-align:right;letter-spacing:0.12px;margin-left:0.12px;">$64,644</div>
<div class="r" style="left:848px;top:716px;width:199px;height:13px;background:#f4f4fc"></div>
<div class="k" style="left:847px;top:729px;width:201px;height:1px"></div>
<div class="x m" style="top:716.60px;font-size:9.0px;line-height:12px;left:848.8px;font-weight:bold;letter-spacing:0.4px;">OBLDG VALUE</div>
<div class="x m" style="top:714.60px;font-size:15px;line-height:20px;left:948.3px;letter-spacing:0.0px;">+</div>
<div class="x m" style="top:715.75px;font-size:12.2px;line-height:16px;left:445.70000000000005px;width:600px;text-align:right;letter-spacing:0.12px;margin-left:0.12px;">$200</div>
<div class="k" style="left:847px;top:743px;width:201px;height:1px"></div>
<div class="x m" style="top:730.60px;font-size:9.0px;line-height:12px;left:848.8px;font-weight:bold;letter-spacing:0.4px;">LAND VALUE</div>
<div class="x m" style="top:728.60px;font-size:15px;line-height:20px;left:948.3px;letter-spacing:0.0px;">+</div>
<div class="x m" style="top:729.75px;font-size:12.2px;line-height:16px;left:445.70000000000005px;width:600px;text-align:right;letter-spacing:0.12px;margin-left:0.12px;">$20,449</div>
<div class="r" style="left:848px;top:744px;width:199px;height:13px;background:#f4f4fc"></div>
<div class="k" style="left:847px;top:757px;width:201px;height:1px"></div>
<div class="x m" style="top:744.60px;font-size:9.0px;line-height:12px;left:848.8px;font-weight:bold;letter-spacing:0.4px;">APPRAISED VALUE</div>
<div class="x m" style="top:743.75px;font-size:12.2px;line-height:16px;left:445.70000000000005px;width:600px;text-align:right;letter-spacing:0.12px;margin-left:0.12px;">$85,293</div>
<div class="r" style="left:848px;top:758px;width:199px;height:13px;background:#f4f4fc"></div>
<div class="k" style="left:847px;top:771px;width:201px;height:1px"></div>
<div class="x m" style="top:758.60px;font-size:9.0px;line-height:12px;left:848.8px;font-weight:bold;letter-spacing:0.4px;">DEFERRED VALUE</div>
<div class="x m" style="top:757.75px;font-size:12.2px;line-height:16px;left:949px;letter-spacing:0.12px;-webkit-text-stroke:0.3px #000">–</div>
<div class="x m" style="top:757.75px;font-size:12.2px;line-height:16px;left:445.70000000000005px;width:600px;text-align:right;letter-spacing:0.12px;margin-left:0.12px;">$0</div>
<div class="k" style="left:946px;top:701px;width:2px;height:71px"></div>
<div class="k" style="left:947px;top:742px;width:101px;height:3px"></div>
<div class="k" style="left:902px;top:771px;width:146px;height:3px"></div>
<div class="r" style="left:903px;top:774px;width:144px;height:25px;background:#ffff00"></div>
<div class="k" style="left:902px;top:771px;width:1px;height:29px"></div>
<div class="x m" style="top:773.60px;font-size:9.0px;line-height:12px;left:574px;width:600px;text-align:center;font-weight:bold;letter-spacing:0.4px;padding-left:0.4px;">TAXABLE</div>
<div class="x m" style="top:783.60px;font-size:9.0px;line-height:12px;left:574px;width:600px;text-align:center;font-weight:bold;letter-spacing:0.4px;padding-left:0.4px;">VALUE</div>
<div class="x s" style="top:773.07px;font-size:20px;line-height:26px;left:445.5px;width:600px;text-align:right;font-weight:bold;color:#e01010;">$85,293</div>
<svg width="403" height="543" viewBox="644 0 403 543" style="left:644px;top:0px">
<polygon points="677,446.2 1015,446.2 1015,253.4 918.3,253.4 918.3,301.3 789.5,301.3 789.5,269.6 677,269.6" fill="#add8e6" stroke="#111" stroke-width="1.6"/>
<rect x="789.5" y="269.6" width="48.5" height="31.69999999999999" fill="#ffb6c1" stroke="#111" stroke-width="1.6"/>
<rect x="789.5" y="446.2" width="128.79999999999995" height="64.30000000000001" fill="#d3d3d3" stroke="#111" stroke-width="1.6"/>
<g font-family="'Liberation Sans',Arial,sans-serif" font-size="15.6" fill="#111" text-anchor="middle">
<text x="734" y="286.9" textLength="19.8" lengthAdjust="spacingAndGlyphs">14</text>
<text x="780.8" y="290.5" textLength="9.9" lengthAdjust="spacingAndGlyphs">4</text>
<text x="853.5" y="318.5" textLength="19.8" lengthAdjust="spacingAndGlyphs">16</text>
<text x="927.5" y="281.5" textLength="9.9" lengthAdjust="spacingAndGlyphs">6</text>
<text x="966.8" y="270.5" textLength="19.8" lengthAdjust="spacingAndGlyphs">12</text>
<text x="690.3" y="362.5" textLength="19.8" lengthAdjust="spacingAndGlyphs">22</text>
<text x="1001.7" y="356.1" textLength="19.8" lengthAdjust="spacingAndGlyphs">24</text>
<text x="846.9" y="440.0" textLength="19.8" lengthAdjust="spacingAndGlyphs">42</text>
</g>
<g font-family="'Liberation Mono','Courier New',monospace" fill="#111" stroke="#111" stroke-width="0.45" text-anchor="middle" style="white-space:pre">
<text x="813" y="289" font-size="13.6" textLength="11.5" lengthAdjust="spacingAndGlyphs">B</text>
<text x="845.6" y="354.5" font-size="15.4" textLength="32.4" lengthAdjust="spacingAndGlyphs">A.1</text>
<text x="847.4" y="376.5" font-size="15.4" textLength="86.4" lengthAdjust="spacingAndGlyphs">884 SqFt</text>
<text x="853.1" y="467" font-size="15.4" textLength="54.0" lengthAdjust="spacingAndGlyphs">C.112</text>
<text x="853.75" y="490" font-size="15.4" textLength="86.4" lengthAdjust="spacingAndGlyphs">128 SqFt</text>
</g></svg>
<svg width="79" height="59" viewBox="0 0 79 59" style="left:405px;top:1px;overflow:hidden"><defs><filter id="bla" x="-20%" y="-20%" width="140%" height="140%"><feGaussianBlur stdDeviation="0.9"/></filter><filter id="nza" x="0" y="0" width="100%" height="100%"><feTurbulence type="fractalNoise" baseFrequency="0.28" numOctaves="2" seed="4" result="n"/><feColorMatrix in="n" type="matrix" values="0 0 0 0 0.05  0 0 0 0 0.1  0 0 0 0 0.03  1.5 0 0 0 -0.5"/></filter></defs><g filter="url(#bla)"><rect x="-6" y="-6" width="91" height="71" fill="#5e8f38"/><rect x="10" y="-6" width="42" height="16" fill="#d4cdd6"/><rect x="66" y="-6" width="19" height="9" fill="#dce2d4"/><line x1="14" y1="2" x2="40" y2="9" stroke="#7a7870" stroke-width="1.2"/><line x1="22" y1="-2" x2="34" y2="14" stroke="#86847c" stroke-width="1.2"/><line x1="40" y1="-2" x2="52" y2="10" stroke="#8a9080" stroke-width="1.4"/><line x1="12" y1="11" x2="30" y2="6" stroke="#9a988c" stroke-width="1"/><ellipse cx="46" cy="3" rx="6" ry="3" fill="#a8b494"/><ellipse cx="20" cy="12" rx="6" ry="2.5" fill="#b4c09c"/><ellipse cx="60" cy="3" rx="5" ry="3" fill="#8aa860"/><ellipse cx="52" cy="21" rx="27" ry="13.5" fill="#74ac36"/><ellipse cx="60" cy="11" rx="15" ry="6" fill="#84b646"/><ellipse cx="40" cy="27" rx="10" ry="6" fill="#629a30"/><ellipse cx="19" cy="22" rx="9" ry="8" fill="#74a44c"/><rect x="-6" y="6" width="8" height="32" fill="#5c8c3c"/><ellipse cx="18" cy="15" rx="7" ry="3" fill="#9ab87a"/><polygon points="5.5,-6 11,-6 7.5,59 2,59" fill="#5e5c4c"/><rect x="-6" y="38" width="8" height="25" fill="#6a7050"/></g><rect x="0" y="0" width="79" height="59" filter="url(#nza)" opacity="0.38"/><g filter="url(#bla)"><rect x="11" y="29.3" width="14" height="2.7" fill="#8a9474"/><rect x="12" y="32" width="13" height="9.5" fill="#a08e7e"/><rect x="14.5" y="33" width="3.5" height="7.5" fill="#d0c0ae"/><rect x="20" y="33.5" width="2.5" height="5" fill="#5a4a4a"/><rect x="25" y="36" width="7" height="5" fill="#3a2c48"/><rect x="32" y="34.5" width="11" height="6" fill="#8c9c9a"/><rect x="43" y="32" width="9" height="14" fill="#6c9a40"/><rect x="53" y="34" width="19.5" height="10" fill="#dccccc"/><rect x="55" y="43.5" width="12" height="3.5" fill="#9a8070"/><line x1="60" y1="30" x2="74" y2="44" stroke="#3a4424" stroke-width="1.2"/><rect x="26" y="41" width="27" height="8" fill="#1e4a18"/><rect x="9" y="40.5" width="17" height="5.5" fill="#3a4e26"/><rect x="53" y="45" width="20" height="4" fill="#3e5c28"/><rect x="-6" y="46" width="70" height="19" fill="#6a6a54"/><rect x="16" y="47.5" width="34" height="3.5" fill="#565e44"/><rect x="60" y="49" width="17" height="7" fill="#7e983c"/><rect x="44" y="54" width="32" height="10" fill="#5c6c40"/><rect x="8" y="55" width="30" height="6" fill="#62624e"/><polygon points="72,14 79,10 79,59 75,59" fill="#2a3a1a"/><line x1="56" y1="20" x2="74" y2="40" stroke="#34421e" stroke-width="1.6"/><line x1="40" y1="12" x2="70" y2="30" stroke="#4a6a28" stroke-width="1.2"/></g></svg>
<svg width="79" height="59" viewBox="0 0 79 59" style="left:485px;top:1px;overflow:hidden"><defs><filter id="blb" x="-20%" y="-20%" width="140%" height="140%"><feGaussianBlur stdDeviation="0.9"/></filter><filter id="nzb" x="0" y="0" width="100%" height="100%"><feTurbulence type="fractalNoise" baseFrequency="0.28" numOctaves="2" seed="4" result="n"/><feColorMatrix in="n" type="matrix" values="0 0 0 0 0.05  0 0 0 0 0.1  0 0 0 0 0.03  1.5 0 0 0 -0.5"/></filter></defs><g filter="url(#blb)"><rect x="-6" y="-6" width="91" height="71" fill="#5e8f38"/><rect x="10" y="-6" width="42" height="16" fill="#d4cdd6"/><rect x="66" y="-6" width="19" height="9" fill="#dce2d4"/><line x1="14" y1="2" x2="40" y2="9" stroke="#7a7870" stroke-width="1.2"/><line x1="22" y1="-2" x2="34" y2="14" stroke="#86847c" stroke-width="1.2"/><line x1="40" y1="-2" x2="52" y2="10" stroke="#8a9080" stroke-width="1.4"/><line x1="12" y1="11" x2="30" y2="6" stroke="#9a988c" stroke-width="1"/><ellipse cx="46" cy="3" rx="6" ry="3" fill="#a8b494"/><ellipse cx="20" cy="12" rx="6" ry="2.5" fill="#b4c09c"/><ellipse cx="60" cy="3" rx="5" ry="3" fill="#8aa860"/><ellipse cx="52" cy="21" rx="27" ry="13.5" fill="#74ac36"/><ellipse cx="60" cy="11" rx="15" ry="6" fill="#84b646"/><ellipse cx="40" cy="27" rx="10" ry="6" fill="#629a30"/><ellipse cx="19" cy="22" rx="9" ry="8" fill="#74a44c"/><rect x="-6" y="6" width="8" height="32" fill="#5c8c3c"/><ellipse cx="18" cy="15" rx="7" ry="3" fill="#9ab87a"/><polygon points="5.5,-6 11,-6 7.5,59 2,59" fill="#5e5c4c"/><rect x="-6" y="38" width="8" height="25" fill="#6a7050"/></g><rect x="0" y="0" width="79" height="59" filter="url(#nzb)" opacity="0.38"/><g filter="url(#blb)"><rect x="11" y="29.3" width="14" height="2.7" fill="#8a9474"/><rect x="12" y="32" width="13" height="9.5" fill="#a08e7e"/><rect x="14.5" y="33" width="3.5" height="7.5" fill="#d0c0ae"/><rect x="20" y="33.5" width="2.5" height="5" fill="#5a4a4a"/><rect x="25" y="36" width="7" height="5" fill="#3a2c48"/><rect x="32" y="34.5" width="11" height="6" fill="#8c9c9a"/><rect x="43" y="32" width="9" height="14" fill="#6c9a40"/><rect x="53" y="34" width="19.5" height="10" fill="#dccccc"/><rect x="55" y="43.5" width="12" height="3.5" fill="#9a8070"/><line x1="60" y1="30" x2="74" y2="44" stroke="#3a4424" stroke-width="1.2"/><rect x="26" y="41" width="27" height="8" fill="#1e4a18"/><rect x="9" y="40.5" width="17" height="5.5" fill="#3a4e26"/><rect x="53" y="45" width="20" height="4" fill="#3e5c28"/><rect x="-6" y="46" width="70" height="19" fill="#6a6a54"/><rect x="16" y="47.5" width="34" height="3.5" fill="#565e44"/><rect x="60" y="49" width="17" height="7" fill="#7e983c"/><rect x="44" y="54" width="32" height="10" fill="#5c6c40"/><rect x="8" y="55" width="30" height="6" fill="#62624e"/><polygon points="72,14 79,10 79,59 75,59" fill="#2a3a1a"/><line x1="56" y1="20" x2="74" y2="40" stroke="#34421e" stroke-width="1.6"/><line x1="40" y1="12" x2="70" y2="30" stroke="#4a6a28" stroke-width="1.2"/></g></svg>
<svg width="79" height="59" viewBox="0 0 79 59" style="left:565px;top:1px;overflow:hidden"><defs><filter id="blc" x="-20%" y="-20%" width="140%" height="140%"><feGaussianBlur stdDeviation="0.9"/></filter><filter id="nzc" x="0" y="0" width="100%" height="100%"><feTurbulence type="fractalNoise" baseFrequency="0.28" numOctaves="2" seed="7" result="n"/><feColorMatrix in="n" type="matrix" values="0 0 0 0 0.05  0 0 0 0 0.1  0 0 0 0 0.03  1.5 0 0 0 -0.5"/></filter></defs><g filter="url(#blc)"><rect x="-6" y="-6" width="91" height="71" fill="#548248"/><rect x="-6" y="-6" width="38" height="30" fill="#3a5c38"/><rect x="32" y="-6" width="36" height="20" fill="#b4cab0"/><ellipse cx="46" cy="4" rx="8.5" ry="5" fill="#eef2ec"/><ellipse cx="58" cy="9" rx="5" ry="6.5" fill="#e2ebe0"/><ellipse cx="38" cy="3" rx="3.5" ry="3.5" fill="#d6e2d4"/><ellipse cx="24" cy="4" rx="8" ry="5" fill="#2c462e"/><ellipse cx="31" cy="0" rx="5" ry="3" fill="#26382a"/><ellipse cx="40" cy="17" rx="12" ry="6" fill="#6f9a5c"/><ellipse cx="14" cy="18" rx="14" ry="6" fill="#56805a"/><ellipse cx="8" cy="8" rx="8" ry="6" fill="#4c744a"/><rect x="66" y="4" width="19" height="46" fill="#6a9a50"/><ellipse cx="74" cy="8" rx="6" ry="6" fill="#8cae80"/><ellipse cx="71" cy="28" rx="6" ry="10" fill="#5c8e44"/><ellipse cx="30" cy="25.5" rx="20" ry="4" fill="#86a86a"/></g><rect x="0" y="0" width="79" height="59" filter="url(#nzc)" opacity="0.38"/><g filter="url(#blc)"><polygon points="0,29.5 43,27 65,31.5 65,33.5 43,29.5 0,32.5" fill="#38382a"/><rect x="12" y="31.5" width="31" height="12" fill="#b4ac9c"/><rect x="24" y="39.5" width="19" height="3.5" fill="#ac948c"/><rect x="-6" y="32.5" width="18" height="6" fill="#5a6a4a"/><rect x="-6" y="37.5" width="20" height="7.5" fill="#26421c"/><ellipse cx="22.5" cy="38" rx="5" ry="4" fill="#4c7c34"/><line x1="20" y1="30" x2="16.5" y2="47" stroke="#4a5a34" stroke-width="1.4"/><rect x="42" y="29.5" width="21" height="13.5" fill="#8c4e3e"/><ellipse cx="55" cy="38" rx="7" ry="4" fill="#909e32"/><rect x="41" y="40.5" width="21" height="4.5" fill="#2c4420"/><rect x="44" y="31" width="3" height="7" fill="#5a3a30"/><rect x="50" y="31" width="3" height="5" fill="#5a3a30"/><rect x="63" y="35" width="9" height="8" fill="#ccd4d4"/><ellipse cx="74" cy="44" rx="6" ry="4" fill="#3a5a2c"/><rect x="-6" y="44.5" width="91" height="21" fill="#3c9a2c"/><rect x="4" y="45" width="66" height="3" fill="#4aa838"/><rect x="20" y="52" width="40" height="8" fill="#359428"/><rect x="-6" y="47" width="11.5" height="18" fill="#a4a8a8"/><rect x="-6" y="52" width="10" height="8" fill="#58605c"/><ellipse cx="70.5" cy="55.5" rx="4.8" ry="4" fill="#c43434"/><rect x="75" y="50" width="10" height="15" fill="#3a4438"/></g></svg>
<svg width="79" height="59" viewBox="0 0 79 59" style="left:405px;top:61px;overflow:hidden"><defs><filter id="bld" x="-20%" y="-20%" width="140%" height="140%"><feGaussianBlur stdDeviation="0.9"/></filter><filter id="nzd" x="0" y="0" width="100%" height="100%"><feTurbulence type="fractalNoise" baseFrequency="0.28" numOctaves="2" seed="11" result="n"/><feColorMatrix in="n" type="matrix" values="0 0 0 0 0.05  0 0 0 0 0.1  0 0 0 0 0.03  1.5 0 0 0 -0.5"/></filter></defs><g filter="url(#bld)"><rect x="-6" y="-6" width="91" height="71" fill="#40583d"/><rect x="-6" y="-6" width="17" height="30" fill="#4c6a48"/><rect x="-6" y="22" width="17" height="15" fill="#2e3e34"/><ellipse cx="34" cy="28" rx="18" ry="8" fill="#243426"/><ellipse cx="52" cy="22" rx="10" ry="8" fill="#2d422a"/><ellipse cx="40" cy="12" rx="16" ry="9" fill="#4c6646"/><polygon points="12,36 20,10 30,2 34,6 26,22 22,36" fill="#7c8c7c"/><ellipse cx="24" cy="20" rx="5" ry="9" fill="#8a988a"/><rect x="53" y="-6" width="32" height="26" fill="#467438"/><ellipse cx="68" cy="8" rx="9" ry="7" fill="#528240"/><rect x="56" y="20" width="29" height="12" fill="#3b5836"/><rect x="64" y="29" width="21" height="14" fill="#74846c"/></g><rect x="0" y="0" width="79" height="59" filter="url(#nzd)" opacity="0.38"/><g filter="url(#bld)"><rect x="-6" y="36" width="91" height="15" fill="#7e8e69"/><rect x="17" y="43" width="68" height="7" fill="#649446"/><rect x="-6" y="46" width="20" height="5" fill="#74885a"/><rect x="21.5" y="33.8" width="42" height="1.6" fill="#b8d8c0"/><rect x="21.5" y="35.2" width="42" height="7" fill="#a9a9ba"/><rect x="41" y="31.3" width="7" height="2.6" fill="#e4ece4"/><rect x="27" y="32.6" width="14" height="1.4" fill="#1a4a3a"/><polygon points="10,40.5 16,40.5 18,50 9,50" fill="#aaa888"/><polygon points="-2,50.5 30,48.8 54,49.4 54,55.5 -2,56.5" fill="#e2e2e2"/><polygon points="-2,49.6 40,48.2 79,48.6 79,50.5 -2,51.5" fill="#c4ccc4"/><polygon points="52,50 79,49.6 79,54 56,54.6" fill="#2e2e2e"/><polygon points="62,53.4 79,53 79,58 66,58" fill="#b0b0b0"/><polygon points="-2,55 54,54.2 66,57 79,58 79,61 -2,61" fill="#3c3c3c"/></g></svg>
<svg width="79" height="59" viewBox="0 0 79 59" style="left:485px;top:61px;overflow:hidden"><defs><filter id="ble" x="-20%" y="-20%" width="140%" height="140%"><feGaussianBlur stdDeviation="0.9"/></filter><filter id="nze" x="0" y="0" width="100%" height="100%"><feTurbulence type="fractalNoise" baseFrequency="0.28" numOctaves="2" seed="17" result="n"/><feColorMatrix in="n" type="matrix" values="0 0 0 0 0.05  0 0 0 0 0.1  0 0 0 0 0.03  1.5 0 0 0 -0.5"/></filter></defs><g filter="url(#ble)"><rect x="-6" y="-6" width="91" height="71" fill="#335a27"/><ellipse cx="18" cy="7" rx="13" ry="8" fill="#467434"/><ellipse cx="62" cy="9" rx="16" ry="9" fill="#426c32"/><ellipse cx="38" cy="5" rx="7" ry="6" fill="#223c1e"/><ellipse cx="70" cy="21" rx="10" ry="6" fill="#284422"/><ellipse cx="6" cy="10" rx="6" ry="10" fill="#2a4a24"/><ellipse cx="30" cy="14" rx="8" ry="4" fill="#4e7c38"/><ellipse cx="58" cy="18" rx="6" ry="5" fill="#1e3418"/></g><rect x="0" y="0" width="79" height="59" filter="url(#nze)" opacity="0.38"/><g filter="url(#ble)"><rect x="34.4" y="25.4" width="33.5" height="19.8" fill="#6c726a"/><rect x="50" y="27" width="17" height="16" fill="#666c62"/><polygon points="36,22.6 67.6,26.3 67.6,28.6 36,25.2" fill="#a08262"/><polygon points="11.3,16.2 36.5,19 38,23 34,24.8" fill="#c4aa70"/><polygon points="0,22 11.3,16.4 34.4,24.6 34.4,45.2 0,45.8" fill="#cacad6"/><rect x="3.5" y="27" width="3" height="8" fill="#9898b0"/><rect x="18" y="27.5" width="2.6" height="14" fill="#8c8ca0"/><rect x="2" y="36" width="9" height="5" fill="#b0a8c4"/><rect x="46.5" y="-2" width="5.5" height="48" fill="#2c3024"/><ellipse cx="48.5" cy="44.5" rx="2" ry="2" fill="#c8c8c8"/><ellipse cx="26.8" cy="41.6" rx="4.8" ry="3.7" fill="#1c1c1c"/><rect x="15.6" y="40.3" width="6" height="5.4" fill="#b4b4b4"/><rect x="67.6" y="22" width="18" height="24" fill="#1c2c1c"/><rect x="70.6" y="38" width="3.4" height="6" fill="#c0c0c8"/><rect x="-6" y="45.6" width="91" height="21" fill="#386428"/><rect x="-6" y="52" width="91" height="14" fill="#4c9c2c"/><rect x="-6" y="54" width="40" height="12" fill="#58aa32"/><rect x="-2" y="46" width="13" height="6" fill="#98a07e"/><rect x="50" y="46.5" width="22" height="3.5" fill="#5a8a44"/><polygon points="74,34 79,33 79,52 75.5,51" fill="#161616"/></g></svg>
</body></html>
